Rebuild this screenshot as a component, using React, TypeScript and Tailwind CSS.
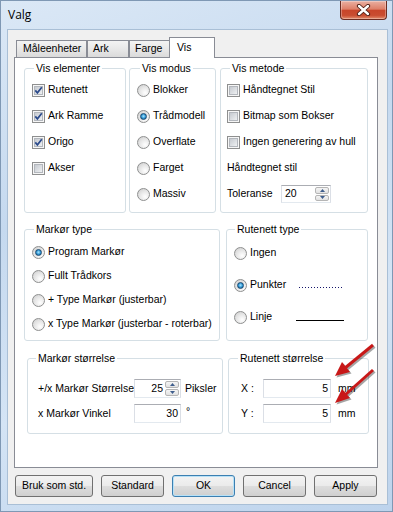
import type { ReactNode } from "react";

function CheckBox({ checked = false }: { checked?: boolean }) {
  return (
    <span className="relative flex h-[13px] w-[13px] shrink-0 items-center justify-center border border-[#8e8f8f] bg-[#f6f6f6]">
      <span className="h-[9px] w-[9px] border border-[#b3b7bd] bg-[linear-gradient(135deg,#c6cad0,#eef0f2)]" />
      {checked && (
        <svg className="absolute left-[1px] top-[1px]" width="9" height="9" viewBox="0 0 9 9">
          <path d="M1.3 4.4 L3.4 6.9 L7.8 1.3" fill="none" stroke="#2b4a8b" strokeWidth="1.7" />
        </svg>
      )}
    </span>
  );
}

function Radio({ checked = false }: { checked?: boolean }) {
  return (
    <span className="flex h-[13px] w-[13px] shrink-0 items-center justify-center rounded-full border border-[#8e8f8f] bg-[radial-gradient(circle_at_65%_70%,#ffffff,#e4e4e4_55%,#c9c9c9)]">
      {checked && (
        <span className="h-[7px] w-[7px] rounded-full border border-[#1d4b72] bg-[radial-gradient(circle_at_50%_45%,#a9e6ff,#2d94d2_55%,#15476f)]" />
      )}
    </span>
  );
}

function SpinBtn({ up = false }: { up?: boolean }) {
  return (
    <span className="flex flex-1 items-center justify-center rounded-[2px] border border-[#b5b5b5] bg-[linear-gradient(#f4f4f4,#e2e2e2)]">
      <svg width="5" height="3" viewBox="0 0 5 3">
        <path d={up ? "M0 3 L2.5 0 L5 3 Z" : "M0 0 L5 0 L2.5 3 Z"} fill="#3e5d8c" />
      </svg>
    </span>
  );
}

function Field({ value, className, align, spin = false }: { value: string; className: string; align: string; spin?: boolean }) {
  return (
    <span className={`flex shrink-0 border border-[#abadb3] border-x-[#dbdfe6] border-b-[#e3e9ef] bg-white ${className}`}>
      <span className={`flex flex-1 items-center ${align}`}>{value}</span>
      {spin && (
        <span className="flex w-[15px] flex-col gap-[1px] py-[1px] pr-[1px]">
          <SpinBtn up />
          <SpinBtn />
        </span>
      )}
    </span>
  );
}

function Group({ title, className, titleClass, children }: { title: string; className: string; titleClass: string; children: ReactNode }) {
  return (
    <div className={`shrink-0 rounded-[3px] border border-[#d5dfe5] ${className}`}>
      <div className={`-mt-[7px] w-fit bg-white px-[2px] leading-[13px] ${titleClass}`}>{title}</div>
      {children}
    </div>
  );
}

function Button({ label, className }: { label: string; className: string }) {
  return (
    <div className={`flex h-[22px] items-center justify-center rounded-[3px] border bg-[linear-gradient(#f3f3f3_0%,#ebebeb_48%,#dddddd_52%,#cfcfcf_100%)] ${className}`}>
      {label}
    </div>
  );
}

export default function App() {
  return (
    <div className="relative h-[512px] w-[393px] overflow-hidden whitespace-nowrap border border-[#7f98b4] bg-[linear-gradient(160deg,#dbe8f6_0%,#c5d9ef_35%,#d4e4f5_65%,#bdd3ec_100%)] font-['Liberation_Sans',Arial,sans-serif] text-[10.5px] text-black">
      {/* title bar */}
      <div className="flex h-[28px] items-start justify-between">
        <div className="pl-[7px] pt-[6px] font-['Open_Sans',sans-serif] text-[12px] leading-[16px]">Valg</div>
        <div className="mr-[5px] flex h-[19px] w-[47px] items-center justify-center rounded-b-[4px] border border-t-0 border-[#6b2c22] bg-[linear-gradient(#eab0a2_0%,#de7f68_45%,#c8452a_52%,#c94d31_80%,#e38c6d_100%)] shadow-[inset_0_0_0_1px_rgba(255,255,255,0.3)]">
          <svg width="15" height="12" viewBox="0 0 15 12">
            <path d="M3 2 L12 10 M12 2 L3 10" stroke="#4a1c14" strokeWidth="4.2" strokeLinecap="round" />
            <path d="M3 2 L12 10 M12 2 L3 10" stroke="#ffffff" strokeWidth="2.4" strokeLinecap="round" />
          </svg>
        </div>
      </div>

      {/* client area */}
      <div className="ml-[6px] h-[476px] w-[381px] border border-[#a9bfd6] bg-[#f0f0f0] px-[6px] pt-[7px]">
        {/* tabs */}
        <div className="flex h-[20px] items-end pl-[2px]">
          <div className="flex h-[17px] w-[71px] items-center border border-b-0 border-[#898c95] bg-[linear-gradient(#f3f3f3,#e8e8e8_50%,#dadada)] pl-[6px]">Måleenheter</div>
          <div className="flex h-[17px] w-[42px] items-center border border-b-0 border-[#898c95] bg-[linear-gradient(#f3f3f3,#e8e8e8_50%,#dadada)] pl-[5px]">Ark</div>
          <div className="flex h-[17px] w-[41px] items-center border border-b-0 border-[#898c95] bg-[linear-gradient(#f3f3f3,#e8e8e8_50%,#dadada)] pl-[5px]">Farge</div>
          <div className="relative z-10 -mb-[1px] -ml-[1px] flex h-[21px] w-[46px] items-center border border-b-0 border-[#898c95] bg-white pl-[7px]">Vis</div>
        </div>

        {/* tab page */}
        <div className="h-[411px] w-[364px] border border-[#898c95] bg-white">
          {/* row 1 */}
          <div className="mt-[10px] flex pl-[9px]">
            <Group title="Vis elementer" className="h-[145px] w-[102px]" titleClass="ml-[9px]">
              <div className="mt-[2px] pl-[7px]">
                {["Rutenett", "Ark Ramme", "Origo", "Akser"].map((t, i) => (
                  <div key={t} className="flex h-[26px] items-center gap-[3px]">
                    <CheckBox checked={i < 3} />
                    {t}
                  </div>
                ))}
              </div>
            </Group>
            <Group title="Vis modus" className="ml-[3px] h-[145px] w-[87px]" titleClass="ml-[10px]">
              <div className="mt-[2px] pl-[7px]">
                {["Blokker", "Trådmodell", "Overflate", "Farget", "Massiv"].map((t, i) => (
                  <div key={t} className="flex h-[26px] items-center gap-[3px]">
                    <Radio checked={i === 1} />
                    {t}
                  </div>
                ))}
              </div>
            </Group>
            <Group title="Vis metode" className="ml-[4px] h-[145px] w-[148px]" titleClass="ml-[9px]">
              <div className="mt-[2px] pl-[6px]">
                {["Håndtegnet Stil", "Bitmap som Bokser", "Ingen generering av hull"].map((t) => (
                  <div key={t} className="flex h-[26px] items-center gap-[3px]">
                    <CheckBox />
                    {t}
                  </div>
                ))}
                <div className="flex h-[26px] items-center">Håndtegnet stil</div>
                <div className="flex h-[26px] items-center">
                  <span className="w-[54px]">Toleranse</span>
                  <Field value="20" className="h-[18px] w-[50px]" align="pl-[3px]" spin />
                </div>
              </div>
            </Group>
          </div>

          {/* row 2 */}
          <div className="mt-[16px] flex pl-[9px]">
            <Group title="Markør type" className="h-[112px] w-[196px]" titleClass="ml-[9px]">
              <div className="mt-[4px] pl-[7px]">
                {["Program Markør", "Fullt Trådkors", "+ Type Markør (justerbar)", "x Type Markør (justerbar - roterbar)"].map((t, i) => (
                  <div key={t} className="flex h-[24px] items-center gap-[3px]">
                    <Radio checked={i === 0} />
                    {t}
                  </div>
                ))}
              </div>
            </Group>
            <Group title="Rutenett type" className="ml-[6px] h-[112px] w-[142px]" titleClass="ml-[8px]">
              <div className="mt-[1px] pl-[7px]">
                <div className="flex h-[32px] items-center gap-[3px]">
                  <Radio />
                  Ingen
                </div>
                <div className="flex h-[32px] items-center gap-[3px]">
                  <Radio checked />
                  <span className="w-[46px]">Punkter</span>
                  <svg width="45" height="4" viewBox="0 0 45 4" className="mt-[4px]">
                    <line x1="0" y1="2.5" x2="45" y2="2.5" stroke="#14146a" strokeWidth="1" strokeDasharray="1 2" />
                  </svg>
                </div>
                <div className="flex h-[32px] items-center gap-[3px]">
                  <Radio />
                  <span className="w-[43px]">Linje</span>
                  <svg width="48" height="4" viewBox="0 0 48 4" className="mt-[5px]">
                    <line x1="0" y1="2.5" x2="48" y2="2.5" stroke="#000000" strokeWidth="1" />
                  </svg>
                </div>
              </div>
            </Group>
          </div>

          {/* row 3 */}
          <div className="mt-[17px] flex pl-[12px]">
            <Group title="Markør størrelse" className="h-[76px] w-[196px]" titleClass="ml-[8px]">
              <div className="mt-[14px] flex flex-col gap-[6px] pl-[10px]">
                <div className="flex h-[19px] items-center">
                  <span className="w-[96px]">+/x Markør Størrelse</span>
                  <Field value="25" className="h-[19px] w-[47px]" align="justify-end pr-[2px]" spin />
                  <span className="ml-[4px]">Piksler</span>
                </div>
                <div className="flex h-[19px] items-center">
                  <span className="w-[96px]">x Markør Vinkel</span>
                  <Field value="30" className="h-[19px] w-[47px]" align="justify-end pr-[2px]" />
                  <span className="ml-[5px] self-start">°</span>
                </div>
              </div>
            </Group>
            <Group title="Rutenett størrelse" className="ml-[5px] h-[76px] w-[141px]" titleClass="ml-[9px]">
              <div className="mt-[14px] flex flex-col gap-[6px] pl-[12px]">
                <div className="flex h-[19px] items-center">
                  <span className="w-[22px]">X :</span>
                  <Field value="5" className="h-[19px] w-[68px]" align="justify-end pr-[2px]" />
                  <span className="ml-[7px]">mm</span>
                </div>
                <div className="flex h-[19px] items-center">
                  <span className="w-[22px]">Y :</span>
                  <Field value="5" className="h-[19px] w-[68px]" align="justify-end pr-[2px]" />
                  <span className="ml-[7px]">mm</span>
                </div>
              </div>
            </Group>
          </div>
        </div>

        {/* buttons */}
        <div className="mt-[7px] flex gap-[8px] pl-[1px]">
          <Button label="Bruk som std." className="w-[78px] border-[#707070]" />
          <Button label="Standard" className="w-[63px] border-[#707070]" />
          <Button label="OK" className="w-[63px] border-[#3c7fb1] shadow-[inset_0_0_0_1px_#b7e1f7]" />
          <Button label="Cancel" className="w-[63px] border-[#707070]" />
          <Button label="Apply" className="w-[63px] border-[#707070]" />
        </div>
      </div>

      {/* red annotation arrows */}
      <svg className="pointer-events-none absolute left-[-1px] top-[-1px]" width="393" height="512" viewBox="0 0 393 512">
        <g opacity="0.35" transform="translate(1.5 1.5)" fill="#000" stroke="#000">
          <line x1="373" y1="345" x2="345" y2="368" strokeWidth="3" />
          <polygon points="335,376 350,372 342,362" strokeWidth="0" />
          <line x1="373" y1="370" x2="345" y2="395" strokeWidth="3" />
          <polygon points="335,403 350,398 342,389" strokeWidth="0" />
        </g>
        <g fill="#c81818" stroke="#c81818">
          <line x1="373" y1="345" x2="345" y2="368" strokeWidth="3" />
          <polygon points="335,376 350,372 342,362" strokeWidth="0" />
          <line x1="373" y1="370" x2="345" y2="395" strokeWidth="3" />
          <polygon points="335,403 350,398 342,389" strokeWidth="0" />
        </g>
      </svg>
    </div>
  );
}
